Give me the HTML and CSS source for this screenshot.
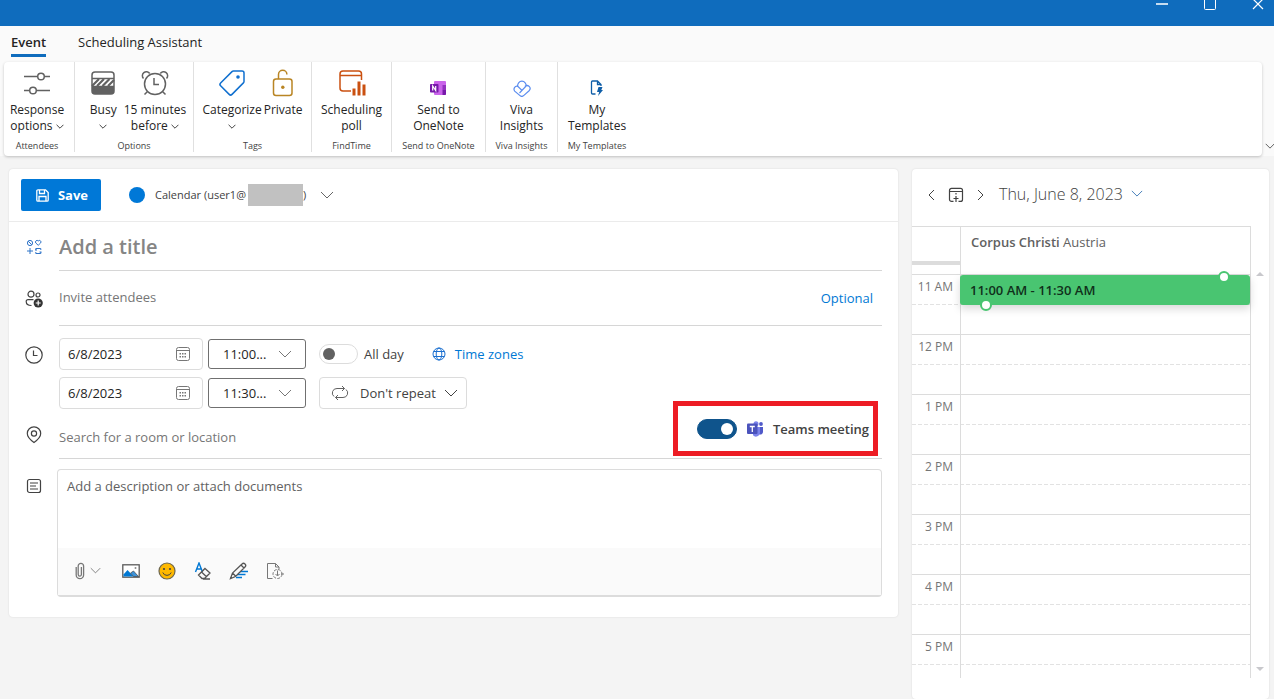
FILE: index.html
```html
<!DOCTYPE html>
<html lang="en">
<head>
<meta charset="utf-8">
<title>New event</title>
<link rel="stylesheet" href="styles.css">
</head>
<body>
<svg class="defs" aria-hidden="true">
  <symbol id="chev" viewBox="0 0 14 8"><path d="M1 1l6 6 6-6" fill="none" stroke="currentColor"/></symbol>
  <symbol id="cal" viewBox="0 0 16 16"><rect x="1.500" y="1.500" width="13" height="13" rx="2" fill="none" stroke="currentColor"/><path d="M1.500 4.500h13" stroke="currentColor"/><path d="M7 7.800h1.500M9.500 7.800H11M4.500 7.800H6M4.500 10.800H6M7 10.800h1.500M9.500 10.800H11" stroke="currentColor" stroke-width="1.400"/></symbol>
</svg>
<div class="app">
  <header class="titlebar">
    <button class="win" aria-label="Minimize"><svg width="12" height="14"><path d="M0 7h12" stroke="#c5dcf0" stroke-width="2"/></svg></button>
    <button class="win" aria-label="Maximize"><svg width="12" height="14"><rect x=".5" y="-2" width="11" height="14.500" rx="1" fill="none" stroke="#fff"/></svg></button>
    <button class="win" aria-label="Close"><svg width="12" height="14"><path d="M1 2l10 10M11 2L1 12" stroke="#fff" stroke-width="1.200"/></svg></button>
  </header>
  <nav class="tabs">
    <button class="tab active">Event</button>
    <button class="tab">Scheduling Assistant</button>
  </nav>
  <div class="ribbon-row">
    <div class="ribbon">
      <section class="group g-attendees">
        <div class="cmds">
          <button class="cmd"><span class="ico"><svg width="26" height="26" fill="none" stroke="#616161" stroke-width="1.500"><path d="M0 6.500h13.500M20.500 6.500h5.500M0 20.500h5.500M12.500 20.500h13.500"/><circle cx="17" cy="6.500" r="3.300"/><circle cx="9" cy="20.500" r="3.300"/></svg></span><span>Response<br>options <svg class="sm"><use href="#chev"/></svg></span></button>
        </div>
        <h2>Attendees</h2>
      </section>
      <section class="group g-options">
        <div class="cmds">
          <button class="cmd"><span class="ico"><svg width="24" height="24"><rect x="1" y="1" width="22" height="22" rx="3" fill="#fff" stroke="#616161" stroke-width="1.500"/><path d="M1 7.500h22M1 15.500h22" stroke="#616161" stroke-width="1.500"/><path d="M1 15l7-7M6 15l7-7M11.500 15l7-7M17 15l6-6" stroke="#616161" stroke-width="2.200"/><path d="M1 16h22v4a3 3 0 0 1-3 3H4a3 3 0 0 1-3-3z" fill="#616161"/></svg></span><span>Busy<br><svg class="sm"><use href="#chev"/></svg></span></button>
          <button class="cmd"><span class="ico"><svg width="28" height="28" fill="none" stroke="#616161" stroke-width="1.500"><circle cx="14" cy="15" r="10.500"/><path d="M13 9v6.500h5M6.500 22.500l-3 3M21.500 22.500l3 3M2.500 9.500a4 4 0 1 1 6.200-5M25.500 9.500a4 4 0 1 0-6.200-5"/></svg></span><span>15 minutes<br>before <svg class="sm"><use href="#chev"/></svg></span></button>
        </div>
        <h2>Options</h2>
      </section>
      <section class="group g-tags">
        <div class="cmds">
          <button class="cmd"><span class="ico"><svg width="28" height="28"><path d="M15.500 2h8.500a2 2 0 0 1 2 2v8.500a2 2 0 0 1-.6 1.400L14 25.400a2 2 0 0 1-2.800 0L2.600 16.800a2 2 0 0 1 0-2.800L14 2.600a2 2 0 0 1 1.500-.6z" fill="none" stroke="#1170cf" stroke-width="1.500"/><circle cx="20" cy="8" r="1.800" fill="#1170cf"/></svg></span><span>Categorize<br><svg class="sm"><use href="#chev"/></svg></span></button>
          <button class="cmd"><span class="ico"><svg width="22" height="28"><rect x="1.500" y="10" width="18.500" height="16.500" rx="2.500" fill="none" stroke="#b98524" stroke-width="1.500"/><path d="M6.500 10V5.500a4.200 4.200 0 0 1 8.400 0" fill="none" stroke="#b98524" stroke-width="1.500"/><circle cx="10.800" cy="18.200" r="1.700" fill="#b98524"/></svg></span><span>Private</span></button>
        </div>
        <h2>Tags</h2>
      </section>
      <section class="group g-poll">
        <div class="cmds">
          <button class="cmd"><span class="ico"><svg width="28" height="28"><path d="M13 22H5a3 3 0 0 1-3-3V5a3 3 0 0 1 3-3h15.500a3 3 0 0 1 3 3v6M2 6.500h21.500" fill="none" stroke="#ca5010" stroke-width="1.500"/><path d="M16 26.500v-7M21 26.500V12.500M26 26.500v-11" stroke="#ca5010" stroke-width="3"/></svg></span><span>Scheduling<br>poll</span></button>
        </div>
        <h2>FindTime</h2>
      </section>
      <section class="group g-note">
        <div class="cmds">
          <button class="cmd"><span class="ico low"><svg width="16" height="16"><rect x="4" y="1" width="12" height="14" rx="1" fill="#ca64ea"/><path d="M12.500 5H16v5h-3.500z" fill="#9332bf"/><path d="M12.500 10H16v4a1 1 0 0 1-1 1h-2.500z" fill="#7719aa"/><rect y="4" width="8.500" height="8.500" rx=".8" fill="#7719aa"/><path d="M2.700 10.500V6l3 4.500V6" fill="none" stroke="#fff" stroke-width="1.200"/></svg></span><span>Send to<br>OneNote</span></button>
        </div>
        <h2>Send to OneNote</h2>
      </section>
      <section class="group g-viva">
        <div class="cmds">
          <button class="cmd"><span class="ico low"><svg width="18" height="18" fill="none" stroke="#5b8def" stroke-width="1.200"><path d="M4.700 7.300a3 3 0 0 0-3 4.800l5 4.300a3 3 0 0 0 4.200 0l5.200-4.700a3 3 0 0 0-4.200-4.300M4.700 7.300L9 11.500 13 7.300a4.200 4.200 0 1 0-8.200 0M6.500 14l6-6.400"/></svg></span><span>Viva<br>Insights</span></button>
        </div>
        <h2>Viva Insights</h2>
      </section>
      <section class="group g-templates">
        <div class="cmds">
          <button class="cmd"><span class="ico low"><svg width="16" height="16"><path d="M6.500 14H3.500a1 1 0 0 1-1-1V2a1 1 0 0 1 1-1H8.500l3.500 3.500V6M8.500 1v3.500H12" fill="none" stroke="#0f5ea8" stroke-width="1.300"/><path d="M9.500 7h4l-1.200 3H14l-5 6 1.200-4H8z" fill="#0f5ea8"/></svg></span><span>My<br>Templates</span></button>
        </div>
        <h2>My Templates</h2>
      </section>
    </div>
    <button class="collapse" aria-label="Ribbon options"><svg width="10" height="6"><use href="#chev"/></svg></button>
  </div>
  <main class="body">
    <form class="card form">
      <div class="form-head">
        <button type="button" class="save"><svg width="13" height="13" fill="none" stroke="#fff" stroke-width="1.300"><path d="M2 .8h7.500l2.700 2.700V11a1.200 1.200 0 0 1-1.200 1.200H2A1.200 1.200 0 0 1 .8 11V2A1.200 1.200 0 0 1 2 .8zM3.500 1v3.500h5V1M3 12V7.500h7V12"/></svg>Save</button>
        <button type="button" class="picker"><span class="dot"></span><span class="acct">Calendar (user1@<span class="mask"></span>)</span><svg width="14" height="8"><use href="#chev"/></svg></button>
      </div>
      <div class="row title-row">
        <svg class="lead" width="16" height="16" fill="none" stroke="#2f74c8"><circle cx="4" cy="4" r="2.600"/><path d="M2.200 2.200l3.600 3.600M12.200 6.300L9.800 4a1.400 1.400 0 0 1 2.400-2 1.400 1.400 0 0 1 2.400 2zM1 12h6M4 9v6M9.800 11V9.500h5v1.500M14.800 13v1.500h-5V13M9 11h2M13.500 13h2"/></svg>
        <div class="cell"><input class="title" type="text" placeholder="Add a title" aria-label="Title"></div>
      </div>
      <div class="row invite-row">
        <svg class="lead" width="18" height="18" fill="none" stroke="#424242" stroke-width="1.200"><circle cx="6" cy="4.200" r="3"/><circle cx="13" cy="5" r="2"/><path d="M8.500 9.600H3A1.800 1.800 0 0 0 1.200 11.500c0 2.500 2 4 5.300 4"/><circle cx="13.200" cy="13" r="4.600" fill="#333" stroke="none"/><path d="M13.200 10.500v5M10.700 13h5" stroke="#fff"/></svg>
        <div class="cell"><input type="text" placeholder="Invite attendees" aria-label="Invite attendees"><a href="#">Optional</a></div>
      </div>
      <div class="row when-row">
        <svg class="lead" width="18" height="18" fill="none" stroke="#424242" stroke-width="1.200"><circle cx="9" cy="9" r="8.200"/><path d="M8.500 4.500v5h4"/></svg>
        <div class="when">
          <label class="date"><input type="text" value="6/8/2023" aria-label="Start date"><svg width="16" height="16"><use href="#cal"/></svg></label>
          <div class="time"><select aria-label="Start time"><option>11:00...</option></select><svg width="14" height="8"><use href="#chev"/></svg></div>
          <div class="opts"><label class="allday"><input class="switch" type="checkbox" role="switch">All day</label>
          <a href="#" class="zones"><svg width="14" height="14" fill="none" stroke="#1a6fd0"><circle cx="7" cy="7" r="6"/><ellipse cx="7" cy="7" rx="2.800" ry="6"/><path d="M1.500 4.500h11M1.500 9.500h11"/></svg>Time zones</a></div>
          <label class="date"><input type="text" value="6/8/2023" aria-label="End date"><svg width="16" height="16"><use href="#cal"/></svg></label>
          <div class="time"><select aria-label="End time"><option>11:30...</option></select><svg width="14" height="8"><use href="#chev"/></svg></div>
          <button type="button" class="repeat"><svg class="loop" width="18" height="16" fill="none" stroke="#616161"><path d="M13.500 3.500H6A4.500 4.500 0 0 0 3 11.500M11 1l2.500 2.500L11 6M4.500 12.500H12a4.500 4.500 0 0 0 3-8M7 10l-2.500 2.500L7 15"/></svg>Don't repeat<svg width="14" height="8"><use href="#chev"/></svg></button>
        </div>
      </div>
      <div class="row loc-row">
        <svg class="lead" width="16" height="18" fill="none" stroke="#424242" stroke-width="1.200"><path d="M8 16.500C4.500 14 1.300 11 1.300 7.500a6.700 6.700 0 0 1 13.400 0C14.700 11 11.500 14 8 16.500z"/><circle cx="8" cy="7.500" r="2.600"/></svg>
        <div class="cell"><input type="text" placeholder="Search for a room or location" aria-label="Location">
          <label class="teams"><input class="switch" type="checkbox" role="switch" checked><svg width="16" height="16"><circle cx="14" cy="3" r="1.900" fill="#5059c9"/><circle cx="9" cy="2.700" r="2.500" fill="#7b83eb"/><path d="M12 6h4v5a2.500 2.500 0 0 1-4 2z" fill="#5059c9"/><path d="M6 6h7v5.500a4 4 0 0 1-7 2.800z" fill="#7b83eb"/><rect y="2.500" width="10.500" height="10.500" rx="1" fill="#4b53bc"/><path d="M2.800 5.500h5M5.300 5.500v5.500" stroke="#fff" stroke-width="1.300"/></svg>Teams meeting</label>
        </div>
      </div>
      <div class="row desc-row">
        <svg class="lead" width="16" height="16" fill="none" stroke="#424242" stroke-width="1.200"><rect x="1.500" y="1.500" width="13" height="13" rx="2"/><path d="M4 5h8M4 8h6M4 11h8"/></svg>
        <div class="desc">
          <textarea placeholder="Add a description or attach documents" aria-label="Description"></textarea>
          <div class="tools">
            <button type="button" aria-label="Attach" class="attach"><svg width="10" height="18" fill="none" stroke="#777" stroke-width="1.300"><path d="M1.200 5v8a3.700 3.700 0 0 0 7.400 0V4a2.700 2.700 0 0 0-5.400 0v8.500a1.600 1.600 0 0 0 3.200 0V5"/></svg><svg width="11" height="7"><use href="#chev"/></svg></button>
            <button type="button" aria-label="Insert picture"><svg width="18" height="14"><rect x=".8" y=".8" width="16.400" height="12.400" fill="#fff" stroke="#5a5a5a" stroke-width="1.300"/><path d="M1.500 10.500l4-4.500 6 6.500h-10z" fill="#0078d4"/><path d="M8.500 9l3-2 5 5.500h-5z" fill="#3d94dc" stroke="#444" stroke-width=".7"/><circle cx="13.500" cy="4" r="1" fill="#888"/></svg></button>
            <button type="button" aria-label="Emoji"><svg width="18" height="18"><circle cx="9" cy="9" r="8" fill="#ffb900" stroke="#6b6650" stroke-width="1.200"/><circle cx="6" cy="7" r="1.100" fill="#444"/><circle cx="12" cy="7" r="1.100" fill="#444"/><path d="M4.800 10.500a4.500 4.500 0 0 0 8.400 0" fill="none" stroke="#444"/></svg></button>
            <button type="button" aria-label="Clear formatting"><svg width="18" height="18" fill="none"><path d="M1.500 10L5 1l3.500 9M2.700 7h4.600" stroke="#0078d4" stroke-width="1.400"/><path d="M11 6.500l5 4.500-5.500 5.500H8L4.500 13zM7.500 10l5 4.700M9 17h7" stroke="#555" stroke-width="1.300"/></svg></button>
            <button type="button" aria-label="Draw"><svg width="20" height="18" fill="none"><path d="M9 9.500h10M7.500 12.500h9M7 15.500h6" stroke="#0078d4" stroke-width="1.400"/><path d="M1.500 16.500l2-5.500L13 2a2 2 0 0 1 3 3L6.500 14.500zM3.500 11l3 3M12 3l3 3" stroke="#555" stroke-width="1.300" fill="#fafafa"/></svg></button>
            <button type="button" aria-label="Loop component"><svg width="18" height="18" fill="none" stroke="#777"><path d="M6.500 16.500h-5V1.500h8l3.500 3.500v2M9.500 1.500V5H13"/><circle cx="11.500" cy="12" r="4.500" stroke-dasharray="3 1.200"/><path d="M11.500 8.500v5M9.500 12l2 2 2-2M15 12h3"/></svg></button>
          </div>
        </div>
      </div>
    </form>
    <aside class="card day">
      <div class="day-head">
        <button aria-label="Previous day"><svg width="8" height="12" fill="none" stroke="#424242"><path d="M6 1L1 6l5 5"/></svg></button>
        <button aria-label="Today"><svg width="16" height="16" fill="none" stroke="#424242" stroke-width="1.200"><path d="M5.500 14.400H3.500a2 2 0 0 1-2-2v-9a2 2 0 0 1 2-2h9a2 2 0 0 1 2 2v9a2 2 0 0 1-2 2h-2M1.500 4.500h13M8 6v1.500M8 9v6M5.500 11.500h5"/></svg></button>
        <button aria-label="Next day"><svg width="8" height="12" fill="none" stroke="#424242"><path d="M2 1l5 5-5 5"/></svg></button>
        <button class="day-date">Thu, June 8, 2023 <svg width="12" height="7"><use href="#chev"/></svg></button>
      </div>
      <div class="grid">
        <div class="allday-row"><div class="gutter"></div><div class="slot"><b>Corpus Christi</b> Austria</div></div>
        <div class="hours">
          <div class="hour"><span class="gutter">11 AM</span><span class="slot"></span></div>
          <div class="hour"><span class="gutter">12 PM</span><span class="slot"></span></div>
          <div class="hour"><span class="gutter">1 PM</span><span class="slot"></span></div>
          <div class="hour"><span class="gutter">2 PM</span><span class="slot"></span></div>
          <div class="hour"><span class="gutter">3 PM</span><span class="slot"></span></div>
          <div class="hour"><span class="gutter">4 PM</span><span class="slot"></span></div>
          <div class="hour last"><span class="gutter">5 PM</span><span class="slot"></span></div>
          <div class="event">11:00 AM - 11:30 AM<i class="knob top"></i><i class="knob bottom"></i></div>
          <i class="arrow up"></i><i class="arrow down"></i>
        </div>
      </div>
    </aside>
  </main>
</div>
</body>
</html>
```
FILE: styles.css
```css
* { box-sizing: border-box; }
body { margin: 0; background: #f4f4f4; color: #242424; font: 13px/16px "Open Sans", "Noto Sans", sans-serif; }
button, input, select, textarea { font: inherit; color: inherit; background: none; border: 0; padding: 0; margin: 0; outline: 0; }
button { cursor: pointer; }
a { color: #0078d4; text-decoration: none; }
svg { flex: none; }
.defs { display: none; }
.app { min-height: 100vh; display: flex; flex-direction: column; }

.titlebar { height: 26px; background: #0f6cbd; display: flex; justify-content: flex-end; align-items: flex-start; gap: 36px; padding-right: 10px; }
.win { display: flex; height: 14px; margin-top: -3px; }

.tabs { background: #fafafa; height: 36px; display: flex; gap: 32px; padding: 8px 11px 5px; }
.tab { border-bottom: 3px solid transparent; padding-bottom: 4px; }
.tab.active { border-color: #0f6cbd; font-weight: 600; }

.ribbon-row { display: flex; background: #fafafa; padding-left: 4px; align-items: flex-end; }
.ribbon { flex: 1; display: flex; height: 94px; background: #fff; border-radius: 4px; box-shadow: 0 1px 3px rgba(0, 0, 0, .22); }
.group { height: 90px; border-right: 1px solid #e0e0e0; display: flex; flex-direction: column; justify-content: space-between; }
.group:last-child { border: 0; }
.group h2 { margin: 0; font-size: 9px; line-height: 12px; font-weight: 400; text-align: center; color: #424242; }
.g-attendees { width: 71px; padding-right: 4px; }
.g-options { width: 119px; }
.g-options .cmds { padding-left: 8px; gap: 7px; }
.g-tags { width: 118px; }
.g-tags .cmds { gap: 2px; }
.g-poll { width: 80px; }
.g-note { width: 94px; }
.g-viva { width: 72px; }
.g-templates { width: 78px; }
.cmds { display: flex; justify-content: center; }
.cmd { font-size: 12px; display: flex; flex-direction: column; align-items: center; white-space: nowrap; }
.ico { height: 40px; display: flex; align-items: center; padding-top: 2px; }
.ico.low { padding-top: 12px; }
.sm { width: 8px; height: 5px; vertical-align: 1px; stroke-width: 1.500; }
.collapse { width: 12px; padding: 0 0 7px 3px; overflow: hidden; display: flex; }

.body { flex: 1; display: flex; gap: 14px; padding: 13px 5px 0 9px; align-items: flex-start; }
.card { background: #fff; border-radius: 4px; box-shadow: 0 0 2px rgba(0, 0, 0, .12); }
.form { flex: 1; min-width: 0; padding-bottom: 20px; }
.form-head { display: flex; align-items: center; gap: 28px; height: 53px; padding: 0 12px; border-bottom: 1px solid #ebebeb; }
.save { background: #0078d7; color: #fff; font-weight: 700; width: 80px; height: 32px; border-radius: 2px; display: flex; align-items: center; justify-content: flex-end; padding-right: 13px; gap: 9px; }
.picker { display: flex; align-items: center; gap: 10px; font-size: 11px; color: #424242; }
.dot { width: 16px; height: 16px; border-radius: 50%; background: #0078d7; }
.acct { display: flex; align-items: center; margin-right: 4px; }
.mask { width: 55px; height: 22px; margin-left: 2px; background: #c1c1c1; }
.picker svg { color: #666; }

.row { display: grid; grid-template-columns: 50px 1fr; padding-right: 16px; }
.lead { justify-self: center; align-self: center; }
.cell { display: flex; align-items: center; border-bottom: 1px solid #d6d6d6; height: 100%; }
.cell input[type="text"] { flex: 1; min-width: 0; }
::placeholder { color: #767676; opacity: 1; }
.title-row { height: 49px; }
.title { font-size: 20px; line-height: 28px; font-weight: 600; padding-top: 2px; }
.title::placeholder { color: #858585; }
.invite-row { height: 55px; }
.invite-row input { padding-bottom: 2px; }
.invite-row a { padding-right: 9px; }
.when-row { padding-top: 12px; }
.when-row .lead { align-self: start; margin-top: 8px; }
.when { display: grid; grid-template-columns: 144px 98px 1fr; column-gap: 5px; row-gap: 7px; align-items: center; }
.date { display: flex; align-items: center; height: 32px; border: 1px solid #dcdcdc; border-radius: 4px; padding: 0 11px 0 8px; color: #777; }
.date input { flex: 1; min-width: 0; color: #242424; }
.time { display: flex; align-items: center; height: 30px; border: 1px solid #707070; border-radius: 3px; padding: 0 13px 0 14px; color: #777; }
.time select { flex: 1; min-width: 0; appearance: none; color: #242424; }
.opts { display: flex; align-items: center; gap: 28px; padding-left: 8px; }
.allday, .zones { display: flex; align-items: center; gap: 6px; color: #424242; }
.zones { color: #0078d4; gap: 9px; }
.switch { appearance: none; width: 39px; height: 20px; border: 1px solid #dcdcdc; border-radius: 10px; display: flex; align-items: center; padding: 0 3px; }
.switch::before { content: ""; width: 12px; height: 12px; border-radius: 50%; background: #616161; }
.switch:checked { background: #0f548c; border-color: #0f548c; width: 40px; justify-content: flex-end; }
.switch:checked::before { background: #fff; }
.repeat { width: 148px; height: 32px; margin-left: 8px; border: 1px solid #dcdcdc; border-radius: 4px; display: flex; align-items: center; padding: 0 8px 0 11px; gap: 8px; color: #424242; white-space: nowrap; }
.repeat .loop { margin-right: 3px; }
.loc-row { height: 50px; }
.loc-row .lead { margin-top: 2px; }
.loc-row .cell > input { padding-top: 6px; }
.teams { display: flex; align-items: center; gap: 10px; height: 55px; padding: 0 4px 0 19px; margin: -10px 4px 0 0; border: 5px solid #ed1c24; font-weight: 600; color: #424242; position: relative; white-space: nowrap; }
.desc-row { padding-top: 10px; }
.desc-row .lead { align-self: start; margin-top: 9px; }
.desc { margin-left: -2px; border: 1px solid #dcdcdc; border-bottom-width: 2px; border-radius: 4px; }
.desc textarea { display: block; width: 100%; height: 78px; padding: 8px 9px; resize: none; }
.desc ::placeholder { color: #616161; }
.tools { display: flex; align-items: center; gap: 18px; height: 47px; padding: 0 17px 2px; background: #fafafa; }
.tools button { display: flex; align-items: center; justify-content: center; gap: 5px; width: 18px; color: #666; }
.tools .attach { width: 26px; margin-right: 3px; }

.day { width: 357px; align-self: stretch; }
.day-head { display: flex; align-items: center; height: 57px; padding: 0 0 6px 16px; gap: 12px; color: #424242; }
.day-head button { display: flex; align-items: center; }
.day-head .day-date { font-size: 16px; line-height: 24px; font-weight: 300; gap: 8px; padding: 0 0 2px 3px; white-space: nowrap; }
.day-date svg { color: #2b6cb0; }
.grid { margin-right: 18px; }
.allday-row { display: flex; height: 48px; border: solid #dcdcdc; border-width: 1px 1px 0 0; }
.gutter { width: 48px; flex: none; }
.allday-row .gutter { height: 38px; border-bottom: 4px solid #dcdcdc; }
.slot { flex: 1; border-left: 1px solid #dcdcdc; }
.allday-row .slot { padding: 7px 10px; color: #616161; }
b { font-weight: 600; }
.hours { position: relative; border-right: 1px solid #dcdcdc; }
.hour { display: flex; height: 60px; border-top: 1px solid #dcdcdc; background: repeating-linear-gradient(90deg, #e2e2e2 0 4px, transparent 4px 6px) 0 29px / 100% 1px no-repeat; }
.hour.last { height: 44px; }
.hour .gutter { font-size: 12px; color: #757575; text-align: right; padding: 4px 7px 0 0; }
.event { position: absolute; left: 48px; right: 0; top: 1px; height: 30px; background: #49c571; border-radius: 3px; padding: 7px 10px; font-weight: 600; color: #10301b; box-shadow: 0 4px 8px rgba(0, 0, 0, .15); }
.knob { position: absolute; width: 12px; height: 12px; border: 2px solid #49c571; border-radius: 50%; background: #fff; }
.knob.top { right: 20px; top: -4px; }
.knob.bottom { left: 20px; bottom: -6px; }
.arrow { position: absolute; right: -14px; border: 4px solid transparent; }
.arrow.up { top: -6px; border-bottom-color: #c8c8cc; }
.arrow.down { bottom: 3px; border-top-color: #c8c8cc; }
```
